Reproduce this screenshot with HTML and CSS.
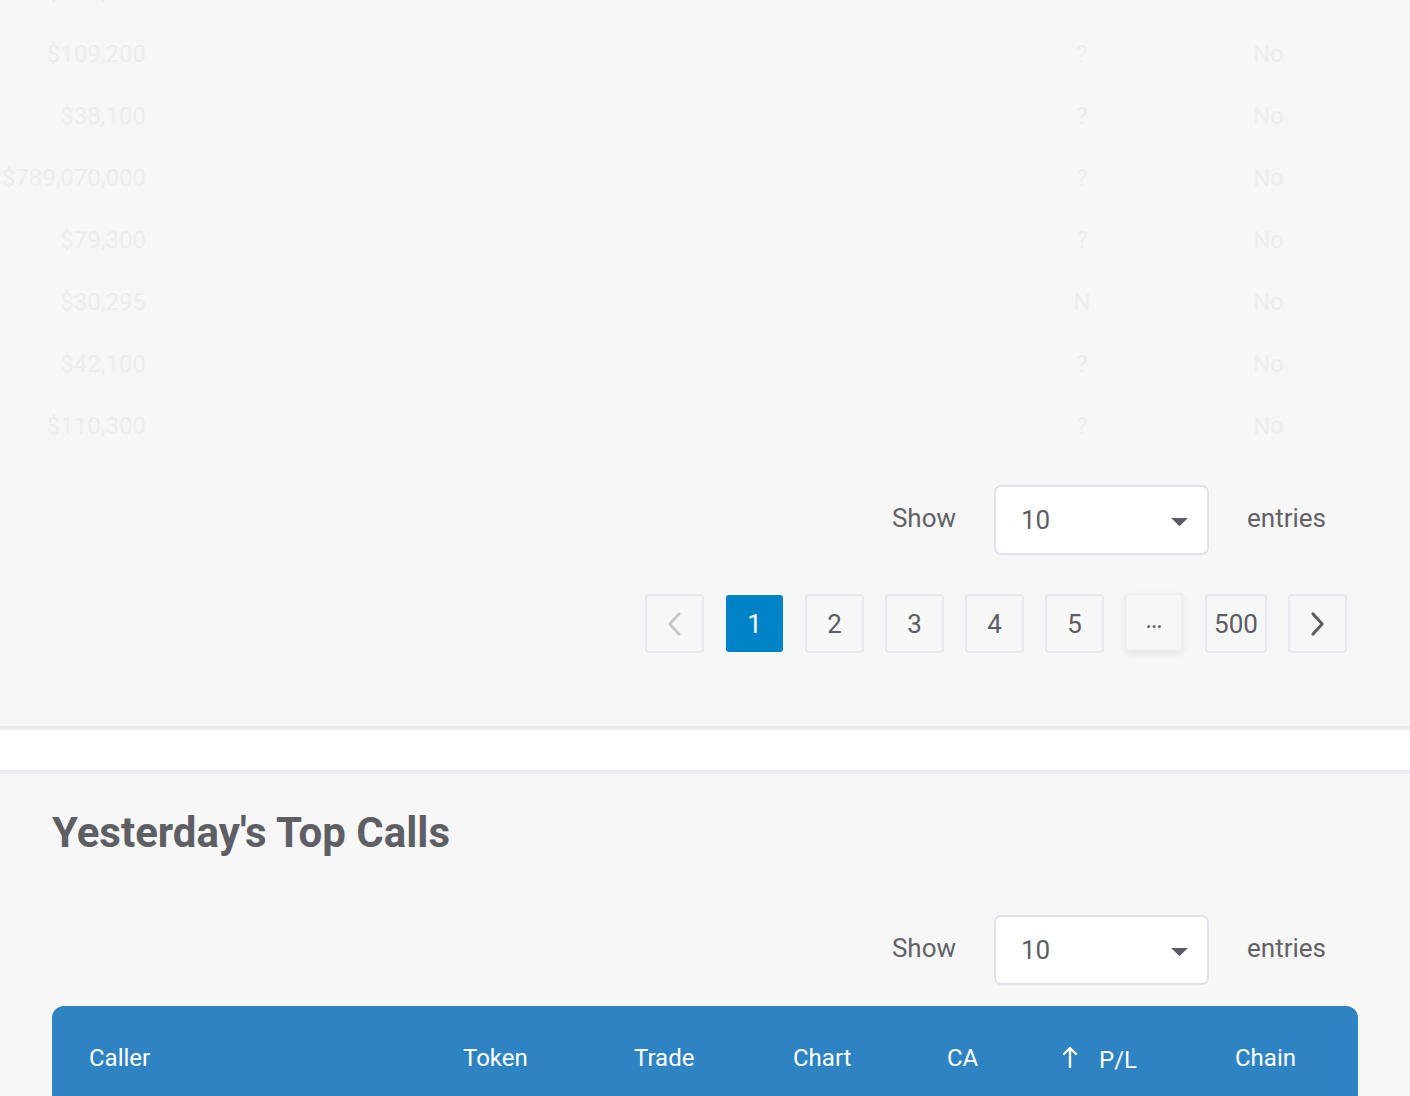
FILE: index.html
```html
<!DOCTYPE html>
<html lang="en">
<head>
<meta charset="utf-8">
<title>Top Calls</title>
<link rel="stylesheet" href="styles.css">
</head>
<body>
<section class="today">
  <div class="faded-table">
    <div class="frow first"><span class="mc">$120,500</span><span></span><span class="q">?</span><span></span><span class="no">No</span></div>
    <div class="frow"><span class="mc">$109,200</span><span></span><span class="q">?</span><span></span><span class="no">No</span></div>
    <div class="frow"><span class="mc">$38,100</span><span></span><span class="q">?</span><span></span><span class="no">No</span></div>
    <div class="frow"><span class="mc">$789,070,000</span><span></span><span class="q">?</span><span></span><span class="no">No</span></div>
    <div class="frow"><span class="mc">$79,300</span><span></span><span class="q">?</span><span></span><span class="no">No</span></div>
    <div class="frow"><span class="mc">$30,295</span><span></span><span class="q">N</span><span></span><span class="no">No</span></div>
    <div class="frow"><span class="mc">$42,100</span><span></span><span class="q">?</span><span></span><span class="no">No</span></div>
    <div class="frow"><span class="mc">$110,300</span><span></span><span class="q">?</span><span></span><span class="no">No</span></div>
  </div>

  <div class="length-ctrl">
    <span class="lbl">Show</span>
    <div class="select"><span>10</span><svg class="caret" viewBox="0 0 17 8" width="17" height="8"><path d="M0 0h17L9.2 7.6a1 1 0 0 1-1.4 0z"/></svg></div>
    <span class="lbl">entries</span>
  </div>

  <nav class="pager">
    <span class="pbtn disabled"><svg viewBox="0 0 16 26" width="16" height="26"><path d="M13 2L3 13l10 11" /></svg></span>
    <span class="pbtn active">1</span>
    <span class="pbtn">2</span>
    <span class="pbtn">3</span>
    <span class="pbtn">4</span>
    <span class="pbtn">5</span>
    <span class="pbtn ellipsis">…</span>
    <span class="pbtn wide">500</span>
    <span class="pbtn next"><svg viewBox="0 0 16 26" width="16" height="26"><path d="M3 2l10 11L3 24" /></svg></span>
  </nav>
</section>

<div class="divider"></div>

<section class="yesterday">
  <h2 class="title">Yesterday's Top Calls</h2>
  <div class="length-ctrl second">
    <span class="lbl">Show</span>
    <div class="select"><span>10</span><svg class="caret" viewBox="0 0 17 8" width="17" height="8"><path d="M0 0h17L9.2 7.6a1 1 0 0 1-1.4 0z"/></svg></div>
    <span class="lbl">entries</span>
  </div>
  <div class="thead">
    <span>Caller</span>
    <span>Token</span>
    <span>Trade</span>
    <span>Chart</span>
    <span>CA</span>
    <span class="pl"><svg class="arrow" viewBox="0 0 16 22" width="16" height="22"><path d="M8 21V2M2 8l6-6 6 6"/></svg><span>P/L</span></span>
    <span>Chain</span>
  </div>
</section>
</body>
</html>
```
FILE: styles.css
```css
* { box-sizing: border-box; }
html, body { margin: 0; padding: 0; }
body {
  background: #f7f7f7;
  font-family: Roboto, "Liberation Sans", sans-serif;
  color: #5f6065;
  overflow: hidden;
}

.today {
  padding-bottom: 73px;
}

.faded-table {
  margin-top: -39px;
}
.frow {
  display: grid;
  grid-template-columns: 146px 906px 60px 141px 1fr;
  height: 62px;
  align-items: center;
  font-size: 24px;
  color: #ededed;
}
.frow .mc { text-align: right; white-space: nowrap; }
.frow .q { text-align: center; }

.length-ctrl {
  display: flex;
  justify-content: flex-end;
  align-items: center;
  padding-right: 84px;
  margin-top: 28px;
}
.lbl {
  font-size: 26px;
  color: #616166;
  margin-bottom: 4px;
}
.select {
  width: 215px;
  height: 70px;
  margin: 0 38px 0 38px;
  background: #fff;
  border: 2px solid #e1e2ea;
  border-radius: 7px;
  display: flex;
  align-items: center;
  justify-content: space-between;
  padding: 0 19px 0 25px;
  font-size: 26px;
  color: #5c5d62;
}
.caret { fill: #5c5d62; margin-top: 4px; }

.pager {
  display: flex;
  justify-content: flex-end;
  align-items: center;
  gap: 21px;
  padding-right: 63px;
  margin-top: 39px;
}
.pbtn {
  width: 59px;
  height: 59px;
  border: 2px solid #e8e8ee;
  border-radius: 4px;
  display: flex;
  align-items: center;
  justify-content: center;
  font-size: 26px;
  color: #5c5d62;
}
.pbtn.wide { width: 62px; }
.pbtn.active {
  background: #0083c6;
  border-color: #0083c6;
  color: #fff;
  width: 57px;
  height: 57px;
  margin: 0 1px;
  border-radius: 3px;
}
.pbtn.ellipsis {
  font-size: 26px;
  width: 58px;
  height: 58px;
  margin-right: 1px;
  padding-bottom: 6px;
  transform: translateY(-2px);
  box-shadow: 0 3px 7px rgba(0,0,0,0.08);
  border-color: #efeff3;
}
.pbtn svg { fill: none; stroke-width: 3; stroke-linecap: round; stroke-linejoin: round; }
.pbtn.disabled svg { stroke: #c8c9cf; width: 15px; }
.pbtn.next svg { stroke: #5a5b60; width: 15px; }

.divider {
  height: 48px;
  background: #fff;
  border-top: 4px solid #ebecf3;
  border-bottom: 4px solid #ebecf3;
}

.yesterday {
  padding: 0 52px;
}
.title {
  margin: 35px 0 0;
  font-size: 42px;
  font-weight: 700;
  color: #5e5f64;
  line-height: 48px;
}
.length-ctrl.second {
  margin-top: 58px;
  padding-right: 32px;
}
.thead {
  margin-top: 21px;
  background: #2e83c3;
  border-radius: 12px 12px 0 0;
  height: 104px;
  display: grid;
  grid-template-columns: 374px 171px 159px 154px 115px 173px 1fr;
  padding-left: 37px;
  align-items: center;
  color: #fff;
  font-size: 24px;
}
.thead > span { line-height: 1; }
.thead .pl { display: flex; align-items: center; gap: 21px; }
.thead .pl > span { margin-top: 4px; }
.arrow { fill: none; stroke: #fff; stroke-width: 2.4; stroke-linecap: round; stroke-linejoin: round; margin-top: -2px; }
```
